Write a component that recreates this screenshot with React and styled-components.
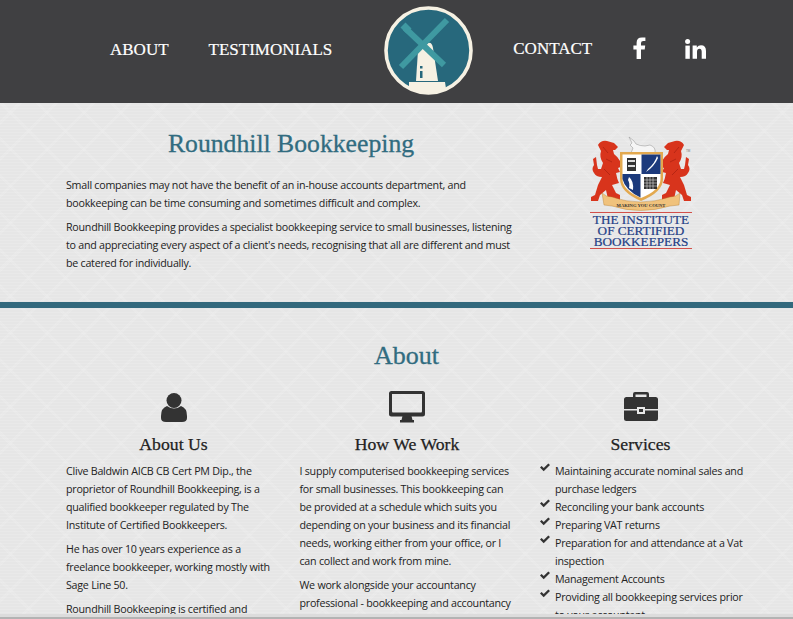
import React from 'react';
import styled, { createGlobalStyle } from 'styled-components';

const Global = createGlobalStyle`
  html, body { margin: 0; padding: 0; height: 100%; overflow: hidden; }
  body { background: #e8e8e8; font-family: "Open Sans", "Liberation Sans", sans-serif; color: #222; }
  * { box-sizing: border-box; }
`;

const Page = styled.div`
  position: relative;
  height: 619px;
  overflow: hidden;
  background-color: #e6e6e6;
  background-image:
    repeating-linear-gradient(0deg, rgba(255,255,255,.12) 0 1px, transparent 1px 3px),
    repeating-linear-gradient(45deg, rgba(255,255,255,.1) 0 3px, transparent 3px 26px),
    repeating-linear-gradient(-45deg, rgba(255,255,255,.1) 0 3px, transparent 3px 26px);
`;

const Header = styled.header`
  height: 103px;
  background: #404042;
  display: flex;
  align-items: center;
  padding-left: 110px;
`;

const NavLink = styled.a`
  font-family: "Liberation Serif", serif;
  font-size: 17px;
  color: #fff;
  margin-right: ${p => p.$gap}px;
  position: relative;
  top: ${p => p.$top ?? -2}px;
  white-space: nowrap;
  -webkit-text-stroke: .2px #fff;
`;

const LogoWrap = styled.div`
  width: 89px;
  height: 89px;
  margin-right: 40px;
  flex: none;
  position: relative;
  top: -1px;
`;

const Social = styled.a`
  color: #fff;
  display: flex;
  margin-right: ${p => p.$gap}px;
  position: relative;
  top: ${p => p.$top}px;
`;

const Hero = styled.section`
  height: 199px;
  padding: 0 66px;
  display: flex;
`;

const HeroText = styled.div`
  width: 450px;
`;

const HeroTitle = styled.h1`
  margin: 25px 0 16px;
  font-family: "Liberation Serif", serif;
  font-weight: 400;
  font-size: 25.7px;
  line-height: 32px;
  color: #316c80;
  text-align: center;
  -webkit-text-stroke: .3px #316c80;
`;

const Para = styled.p`
  margin: 0 0 6px;
  font-size: 10.7px;
  letter-spacing: -.25px;
  line-height: 18px;
  color: #222;
`;

const Crest = styled.div`
  width: 102px;
  margin: 32px 0 0 74px;
  display: flex;
  flex-direction: column;
  align-items: center;
`;

const CrestText = styled.div`
  width: 100%;
  margin-top: -1px;
  border-top: 1.5px solid #d2504a;
  border-bottom: 1.5px solid #d2504a;
  font-family: "Liberation Serif", serif;
  font-size: 13.2px;
  line-height: 11px;
  color: #243f86;
  text-align: center;
  padding: 1px 0;
  white-space: nowrap;
  -webkit-text-stroke: .2px #243f86;
`;

const Divider = styled.div`
  height: 6px;
  background: #33697d;
`;

const About = styled.section`
  padding: 32px 66px 0;
`;

const AboutTitle = styled.h2`
  margin: 0 0 18px;
  font-family: "Liberation Serif", serif;
  font-weight: 400;
  font-size: 26px;
  line-height: 32px;
  color: #316c80;
  text-align: center;
  padding-left: 20px;
  -webkit-text-stroke: .3px #316c80;
`;

const Columns = styled.div`
  display: grid;
  grid-template-columns: 215px 215px 215px;
  column-gap: 18.5px;
`;

const Column = styled.div``;

const IconBox = styled.div`
  height: 34px;
  display: flex;
  justify-content: center;
  align-items: center;
  color: #333;
`;

const ColTitle = styled.h3`
  margin: 8px 0 6px;
  font-family: "Liberation Serif", serif;
  font-weight: 400;
  font-size: 17.7px;
  line-height: 24px;
  color: #222;
  text-align: center;
  -webkit-text-stroke: .25px #222;
`;

const List = styled.ul`
  list-style: none;
  margin: 0;
  padding: 0;
`;

const Item = styled.li`
  display: flex;
  gap: 5px;
  font-size: 10.7px;
  letter-spacing: -.25px;
  line-height: 18px;
  color: #222;
  margin-left: 7px;
`;

const Check = styled.span`
  flex: none;
  width: 10px;
  padding-top: 1px;
  color: #333;
  svg { display: block; }
`;

const ScrollEdge = styled.div`
  position: absolute;
  left: 0;
  right: 0;
  bottom: 0;
  height: 5px;
  background: linear-gradient(#dcdcdc 0 3px, #b3b3b3 3px);
`;

const Windmill = () => (
  <svg width="89" height="89" viewBox="0 0 89 89">
    <defs>
      <clipPath id="disc"><circle cx="44.5" cy="44.5" r="43" /></clipPath>
    </defs>
    <circle cx="44.5" cy="44.5" r="42.5" fill="#27687c" stroke="#f6f1e3" strokeWidth="3.6" />
    <path d="M34 44 L44 37 Q48 36 49 42 L54 75 L32 75 Z" fill="#f6f1e3" />
    <g stroke="#3f99a1" strokeWidth="6">
      <line x1="21" y1="22" x2="60" y2="59" />
      <line x1="63" y1="14" x2="17" y2="61" />
      <line x1="19" y1="19" x2="25" y2="25" strokeWidth="7" />
    </g>
    <rect x="36" y="60" width="2.5" height="2.5" fill="#27687c" />
    <rect x="36" y="65" width="2.5" height="7" fill="#27687c" />
    <path d="M25 76 H61 L63 89 H25 Z" fill="#f6f1e3" clipPath="url(#disc)" />
  </svg>
);

const Lion = ({ flip }) => (
  <g transform={flip ? 'translate(102,0) scale(-1,1)' : undefined}>
    <path
      fill="#d8341c"
      d="M8 10 Q11 5 17 6 L24 8 L28 12 L25 15 L23 15 L24 19 Q28 22 30 26 L33 31 L28 33 L30 37 L26 38 Q27 44 29 48 L22 50 L26 58 L30 60 L30 66 L18 64 L16 55 L10 60 L8 66 L1 66 L1 62 L5 60 L8 50 L12 42 Q6 42 4 38 Q1 34 4 30 L3 24 L6 22 L7 30 L8 34 L11 34 L13 28 Q9 22 11 16 Z"
    />
    <path d="M13 12 L18 18 M16 24 L22 27 M14 34 L20 40" stroke="#a81f10" strokeWidth=".7" fill="none" />
  </g>
);

const CrestArt = () => (
  <svg width="102" height="78" viewBox="0 0 102 78" style={{ display: 'block' }}>
    <Lion />
    <Lion flip />
    <path d="M39 2 L44 6 L46 9 Q50 11 55 11 L60 10 Q66 12 65 18 L41 18 L43 13 L40 10 L42 8 Z" fill="#f5f5f5" stroke="#8f8f8f" strokeWidth=".5" />
    <path d="M30 17 H73 V44 Q73 57 51 66 Q30 57 30 44 Z" fill="#e3a94f" />
    <path d="M32.5 19.5 H70.5 V44 Q70.5 55 51 63 Q32.5 55 32.5 44 Z" fill="#fff" />
    <path d="M51.5 19.5 H70.5 V39 H51.5 Z" fill="#1c3a7c" />
    <path d="M32.5 39 H50.5 V62.5 Q35 55 32.5 44 Z" fill="#1c3a7c" />
    <path d="M37 23 H46 V36 H37 Z" fill="#333" />
    <path d="M38 25 H45 V27 H38 Z M38 30 H45 V32 H38 Z" fill="#ddd" />
    <path d="M67 21 Q65 28 58 34 L56 37 Q64 32 68 23 Z" fill="#fff" />
    <path d="M39 42 Q44 46 43 55 L39 53 Q40 48 38 45 Z" fill="#fff" />
    <path d="M54 42 H67 V54 H54 Z" fill="#333" />
    <path d="M54 45 H67 M54 48 H67 M54 51 H67 M57 42 V54 M60 42 V54 M63 42 V54" stroke="#ddd" strokeWidth=".6" />
    <path d="M12 58 Q16 62 22 62 Q50 72 80 62 Q86 62 90 58 L89 70 L80 71 Q50 80 22 71 L14 70 Z" fill="#f0c27c" stroke="#b57c2c" strokeWidth=".4" />
    <text x="51" y="71.5" fontSize="4.6" textAnchor="middle" fill="#333" fontFamily="Liberation Serif, serif" fontWeight="700">MAKING YOU COUNT</text>
    <text x="96" y="17" fontSize="3" fill="#777" fontFamily="Liberation Sans, sans-serif">TM</text>
  </svg>
);

const UserIcon = () => (
  <svg width="28" height="30" viewBox="0 0 28 30" fill="currentColor">
    <circle cx="14" cy="8.5" r="7.5" />
    <path d="M7 14 Q14 19 21 14 Q27 16 27 24 V26 Q27 30 22 30 H6 Q1 30 1 26 V24 Q1 16 7 14 Z" />
  </svg>
);

const DesktopIcon = () => (
  <svg width="36" height="32" viewBox="0 0 36 32" fill="currentColor">
    <path fillRule="evenodd" d="M2.5 0 H33.5 Q36 0 36 2.5 V23 Q36 25.5 33.5 25.5 H2.5 Q0 25.5 0 23 V2.5 Q0 0 2.5 0 Z M3 3 V20 Q3 21.5 4 21.5 H32 Q33 21.5 33 20 V3 Z" />
    <path d="M13.5 25 H22.5 L23.5 29 H25 V31.5 H11 V29 H12.5 Z" />
  </svg>
);

const BriefcaseIcon = () => (
  <svg width="34" height="30" viewBox="0 0 34 30" fill="currentColor">
    <path fillRule="evenodd" d="M11 0 H23 Q25 0 25 2 V6 H22.5 V2.5 H11.5 V6 H9 V2 Q9 0 11 0 Z" />
    <path d="M2.5 5 H31.5 Q34 5 34 7.5 V17 H21 V15 H13 V17 H0 V7.5 Q0 5 2.5 5 Z" />
    <path d="M0 18.5 H13 V22 H21 V18.5 H34 V26.5 Q34 29 31.5 29 H2.5 Q0 29 0 26.5 Z" />
    <rect x="15" y="17" width="4" height="3" />
  </svg>
);

const CheckIcon = () => (
  <svg width="10" height="9" viewBox="0 0 10 9" fill="currentColor">
    <path d="M0 4.5 L1.6 3 L3.7 5 L8.3 .5 L10 2 L3.7 8.2 Z" />
  </svg>
);

const FbIcon = () => (
  <svg width="13" height="22" viewBox="0 0 13 22" fill="currentColor">
    <path d="M3.6 22 V12.4 H.4 V8.6 H3.6 V5.7 Q3.6 .4 9 .4 Q11.2 .4 12.4 .6 V4 H10.3 Q8 4 8 6.1 V8.6 H12.2 L11.7 12.4 H8 V22 Z" />
  </svg>
);

const LiIcon = () => (
  <svg width="21" height="20" viewBox="0 0 21 20" fill="currentColor">
    <circle cx="2.6" cy="2.6" r="2.5" />
    <rect x=".4" y="6.6" width="4.4" height="13.2" />
    <path d="M7.6 6.6 H11.8 V8.4 Q13.2 6.2 16 6.2 Q21 6.2 21 12 V19.8 H16.7 V12.8 Q16.7 9.8 14.5 9.8 Q12 9.8 12 12.8 V19.8 H7.6 Z" />
  </svg>
);

const services = [
  'Maintaining accurate nominal sales and purchase ledgers',
  'Reconciling your bank accounts',
  'Preparing VAT returns',
  'Preparation for and attendance at a Vat inspection',
  'Management Accounts',
  'Providing all bookkeeping services prior to your accountant',
];

export default function App() {
  return (
    <Page>
      <Global />
      <Header>
        <NavLink $gap={40}>ABOUT</NavLink>
        <NavLink $gap={52}>TESTIMONIALS</NavLink>
        <LogoWrap><Windmill /></LogoWrap>
        <NavLink $gap={41} $top={-3}>CONTACT</NavLink>
        <Social $gap={39} $top={-4}><FbIcon /></Social>
        <Social $gap={0} $top={-3}><LiIcon /></Social>
      </Header>
      <Hero>
        <HeroText>
          <HeroTitle>Roundhill Bookkeeping</HeroTitle>
          <Para>Small companies may not have the benefit of an in-house accounts department, and bookkeeping can be time consuming and sometimes difficult and complex.</Para>
          <Para>Roundhill Bookkeeping provides a specialist bookkeeping service to small businesses, listening to and appreciating every aspect of a client's needs, recognising that all are different and must be catered for individually.</Para>
        </HeroText>
        <Crest>
          <CrestArt />
          <CrestText>THE INSTITUTE<br />OF CERTIFIED<br />BOOKKEEPERS</CrestText>
        </Crest>
      </Hero>
      <Divider />
      <About>
        <AboutTitle>About</AboutTitle>
        <Columns>
          <Column>
            <IconBox><UserIcon /></IconBox>
            <ColTitle>About Us</ColTitle>
            <Para>Clive Baldwin AICB CB Cert PM Dip., the proprietor of Roundhill Bookkeeping, is a qualified bookkeeper regulated by The Institute of Certified Bookkeepers.</Para>
            <Para>He has over 10 years experience as a freelance bookkeeper, working mostly with Sage Line 50.</Para>
            <Para>Roundhill Bookkeeping is certified and</Para>
          </Column>
          <Column>
            <IconBox><DesktopIcon /></IconBox>
            <ColTitle>How We Work</ColTitle>
            <Para>I supply computerised bookkeeping services for small businesses. This bookkeeping can be provided at a schedule which suits you depending on your business and its financial needs, working either from your office, or I can collect and work from mine.</Para>
            <Para>We work alongside your accountancy professional - bookkeeping and accountancy</Para>
          </Column>
          <Column>
            <IconBox><BriefcaseIcon /></IconBox>
            <ColTitle>Services</ColTitle>
            <List>
              {services.map(s => (
                <Item key={s}><Check><CheckIcon /></Check><span>{s}</span></Item>
              ))}
            </List>
          </Column>
        </Columns>
      </About>
      <ScrollEdge />
    </Page>
  );
}
